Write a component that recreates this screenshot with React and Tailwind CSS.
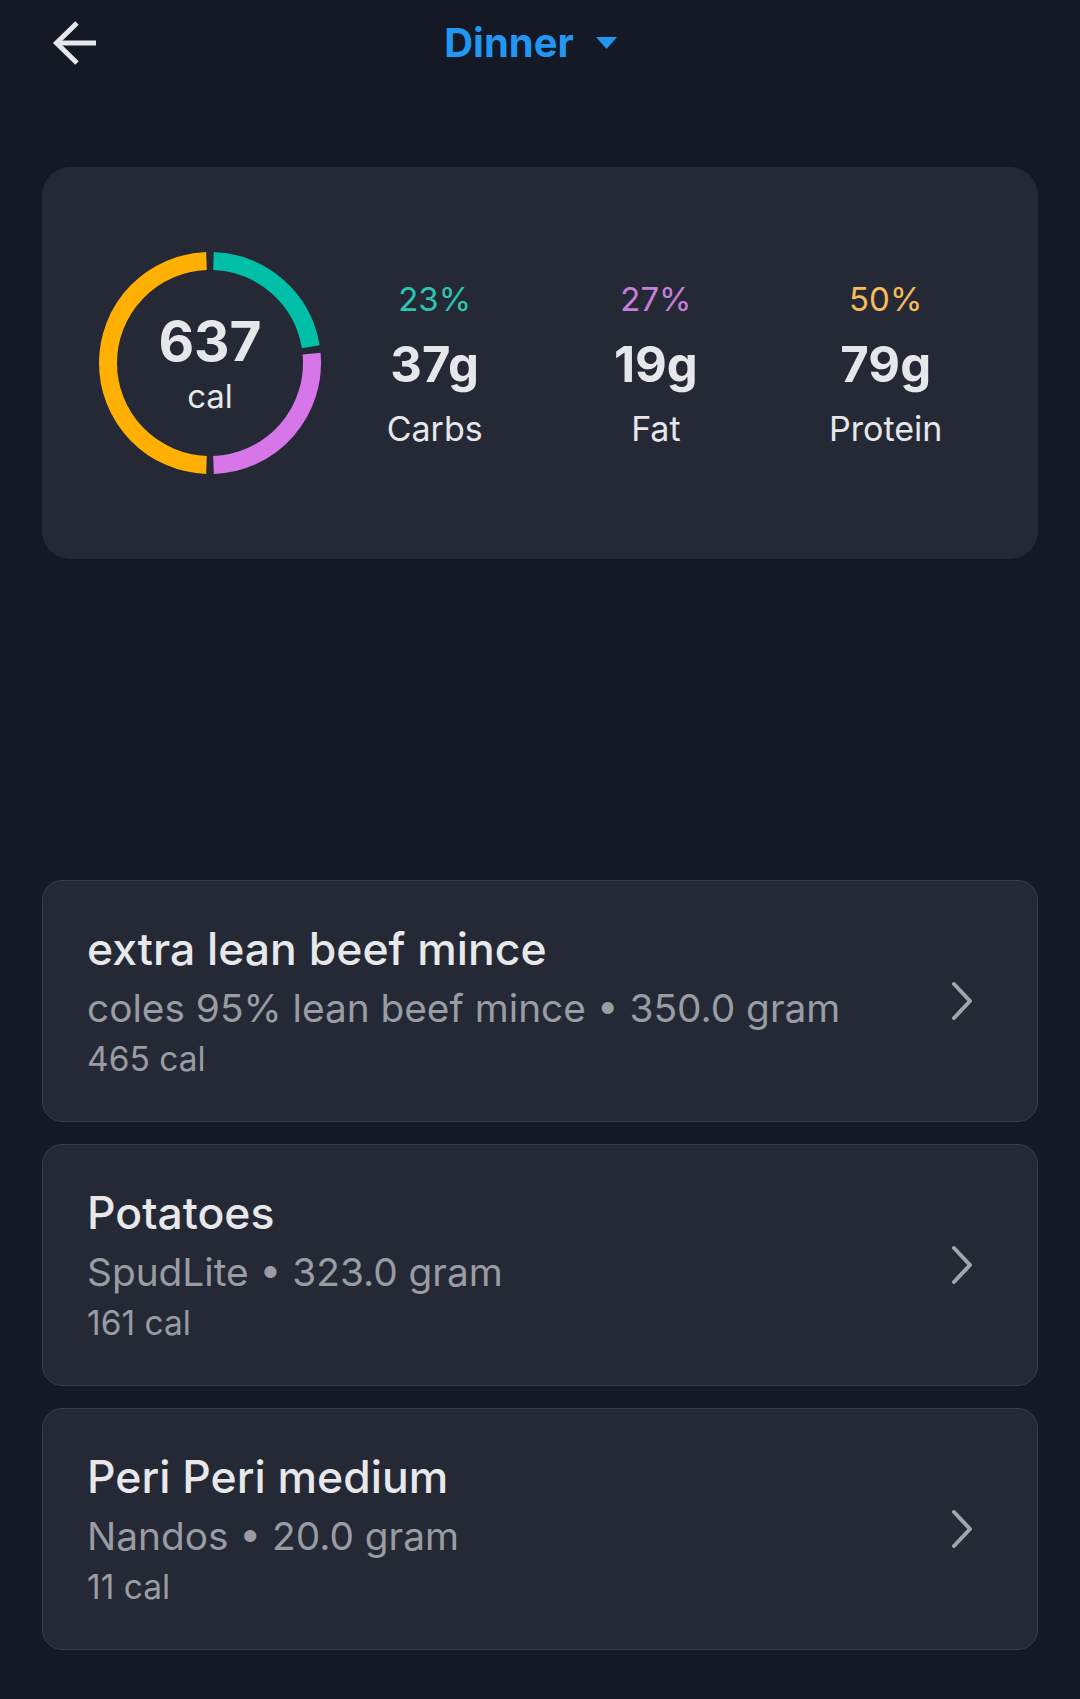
import React from "react";

const macros = [
  { pct: "23%", grams: "37g", label: "Carbs", color: "text-[#2ec4b3]" },
  { pct: "27%", grams: "19g", label: "Fat", color: "text-[#c87fdc]" },
  { pct: "50%", grams: "79g", label: "Protein", color: "text-[#f8bb5a]" },
];

const foods = [
  { name: "extra lean beef mince", detail: "coles 95% lean beef mince • 350.0 gram", cal: "465 cal" },
  { name: "Potatoes", detail: "SpudLite • 323.0 gram", cal: "161 cal" },
  { name: "Peri Peri medium", detail: "Nandos • 20.0 gram", cal: "11 cal" },
];

// ring segments, fraction of circle
const segments = [
  { from: 0, to: 0.23, color: "#00bfa8" },
  { from: 0.23, to: 0.5, color: "#d676e8" },
  { from: 0.5, to: 1, color: "#ffb002" },
];

function arc(cx, cy, r, a0, a1) {
  const p = a => [cx + r * Math.sin(a), cy - r * Math.cos(a)];
  const [x0, y0] = p(a0);
  const [x1, y1] = p(a1);
  const large = a1 - a0 > Math.PI ? 1 : 0;
  return `M${x0} ${y0} A${r} ${r} 0 ${large} 1 ${x1} ${y1}`;
}

function Ring() {
  const gap = 3.5 / 102;
  return (
    <div className="relative w-[222px] h-[222px] shrink-0">
      <svg width="222" height="222" viewBox="0 0 222 222">
        {segments.map((s, i) => (
          <path
            key={i}
            d={arc(111, 111, 102, s.from * 2 * Math.PI + gap, s.to * 2 * Math.PI - gap)}
            fill="none"
            stroke={s.color}
            strokeWidth="18"
          />
        ))}
      </svg>
      <div className="absolute inset-0 flex flex-col items-center justify-center text-[#e6e7ea]">
        <div className="text-[55px] leading-[60px] font-bold">637</div>
        <div className="text-[33px] leading-[40px] mt-[5px]">cal</div>
      </div>
    </div>
  );
}

export default function App() {
  return (
    <div className="min-h-screen bg-[#141925] font-[Inter,sans-serif] pb-10">
      <div className="h-[86px] flex items-center pl-[52px]">
        <svg width="46" height="44" viewBox="0 0 46 44" fill="none" stroke="#e6e7ea" strokeWidth="5">
          <path d="M44 22H5" />
          <path d="M25 2L4.5 22L25 42" />
        </svg>
        <div className="flex-1 flex items-center justify-center pr-[117px]">
          <span className="text-[40px] font-bold text-[#2196f3] leading-none">Dinner</span>
          <svg className="ml-[22px]" width="21" height="12" viewBox="0 0 21 12">
            <path d="M0 0H21L10.5 12Z" fill="#2196f3" />
          </svg>
        </div>
      </div>

      <div className="mx-[42px] mt-[81px] h-[392px] rounded-[28px] bg-[#242935] flex items-center pl-[57px] pr-[30px]">
        <Ring />
        <div className="flex-1 flex justify-around mt-[4px]">
          {macros.map(m => (
            <div key={m.label} className="flex flex-col items-center">
              <div className={`text-[33px] leading-[40px] ${m.color}`}>{m.pct}</div>
              <div className="text-[49px] leading-[56px] font-bold text-[#e6e7ea] mt-[18px]">{m.grams}</div>
              <div className="text-[34px] leading-[44px] text-[#e6e7ea] mt-[14px]">{m.label}</div>
            </div>
          ))}
        </div>
      </div>

      <div className="mx-[42px] mt-[321px] flex flex-col gap-[22px]">
        {foods.map(f => (
          <div
            key={f.name}
            className="h-[242px] rounded-[20px] border border-[#383d49] bg-[#242935] flex items-start pt-[40px] pl-[44px] pr-[64px]"
          >
            <div className="flex-1">
              <div className="text-[44.5px] leading-[56px] font-medium text-[#e8e8ea]">{f.name}</div>
              <div className="text-[38.8px] leading-[53px] mt-[4px] text-[#9a9ca3]">{f.detail}</div>
              <div className="text-[33.5px] leading-[48px] mt-[1px] text-[#9a9ca3]">{f.cal}</div>
            </div>
            <svg className="self-center -mt-[40px]" width="22" height="40" viewBox="0 0 22 40" fill="none" stroke="#a3a5ab" strokeWidth="4" strokeLinecap="round" strokeLinejoin="round">
              <path d="M3 3L19 20L3 37" />
            </svg>
          </div>
        ))}
      </div>
    </div>
  );
}
